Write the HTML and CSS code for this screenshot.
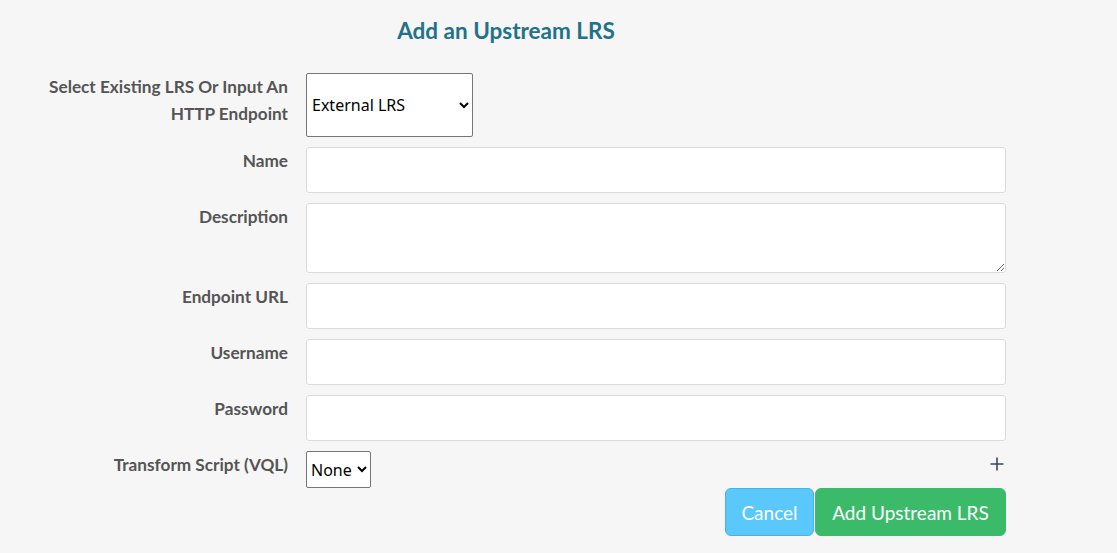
FILE: index.html
```html
<!DOCTYPE html>
<html>
<head>
<meta charset="utf-8">
<link rel="stylesheet" href="styles.css">
</head>
<body>
<div class="page">
  <h1 class="title">Add an Upstream LRS</h1>
  <form class="form">
    <div class="row">
      <label class="label">Select Existing LRS Or Input An HTTP Endpoint</label>
      <div class="field">
        <select class="select select-lrs">
          <option>External LRS</option>
        </select>
      </div>
    </div>
    <div class="row">
      <label class="label">Name</label>
      <div class="field"><input class="input" type="text"></div>
    </div>
    <div class="row">
      <label class="label">Description</label>
      <div class="field"><textarea class="input textarea"></textarea></div>
    </div>
    <div class="row">
      <label class="label">Endpoint URL</label>
      <div class="field"><input class="input" type="text"></div>
    </div>
    <div class="row">
      <label class="label">Username</label>
      <div class="field"><input class="input" type="text"></div>
    </div>
    <div class="row">
      <label class="label">Password</label>
      <div class="field"><input class="input" type="password"></div>
    </div>
    <div class="row row-tight">
      <label class="label">Transform Script (VQL)</label>
      <div class="field field-split">
        <select class="select select-small">
          <option>None</option>
        </select>
        <span class="plus">
          <svg width="16" height="16" viewBox="0 0 16 16"><path d="M8 1.5V14.5M1.5 8H14.5" stroke="#34495e" stroke-width="1.6" fill="none"/></svg>
        </span>
      </div>
    </div>
    <div class="row row-tight">
      <div></div>
      <div class="actions">
        <button type="button" class="btn btn-cancel">Cancel</button>
        <button type="button" class="btn btn-add">Add Upstream LRS</button>
      </div>
    </div>
  </form>
</div>
</body>
</html>
```

FILE: styles.css
```css
html, body {
  margin: 0;
  padding: 0;
  background: #f6f6f6;
}
body {
  font-family: Lato, "Noto Sans", sans-serif;
  color: #555;
}
.page {
  width: 1012px;
}
.title {
  margin: 0;
  padding-top: 18px;
  height: 73px;
  box-sizing: border-box;
  text-align: center;
  font-size: 22.5px;
  font-weight: 700;
  color: #22718a;
  line-height: 26px;
}
.form {
  display: flex;
  flex-direction: column;
  gap: 10px;
}
.row {
  display: grid;
  grid-template-columns: 288px 700px;
  column-gap: 18px;
}
.row-tight + .row-tight {
  margin-top: -10px;
}
.label {
  text-align: right;
  font-weight: 700;
  font-size: 17.2px;
  line-height: 27px;
  padding-top: 0;
  padding-left: 30px;
  color: #555;
}
.field {
  display: flex;
}
.input {
  width: 700px;
  height: 46px;
  box-sizing: border-box;
  border: 1px solid #dcdcdc;
  border-radius: 3px;
  background: #fff;
  margin: 0;
  font: inherit;
}
.textarea {
  height: 70px;
  resize: vertical;
  display: block;
}
.select {
  font-family: "Noto Sans", sans-serif;
  font-size: 16px;
  color: #000;
  background: #fff;
  border: 1px solid #767676;
  border-radius: 2px;
  margin: 0;
  box-sizing: border-box;
}
.select-lrs {
  width: 167px;
  height: 64px;
  padding: 0 1px;
}
.select-small {
  width: 65px;
  height: 37px;
  padding: 0;
}
.field-split {
  justify-content: space-between;
  align-items: center;
}
.plus {
  display: flex;
  align-self: flex-start;
  margin-top: 5px;
  margin-right: 1px;
}
.actions {
  display: flex;
  justify-content: flex-end;
  gap: 1px;
}
.btn {
  height: 48px;
  border-radius: 6px;
  font-family: Lato, "Noto Sans", sans-serif;
  font-size: 19px;
  color: #fff;
  padding: 0;
  cursor: pointer;
}
.btn-cancel {
  width: 89px;
  background: #5ac8fa;
  border: 1px solid #47b2e6;
}
.btn-add {
  width: 191px;
  background: #3bbb6a;
  border: 1px solid #3bbb6a;
}
```
